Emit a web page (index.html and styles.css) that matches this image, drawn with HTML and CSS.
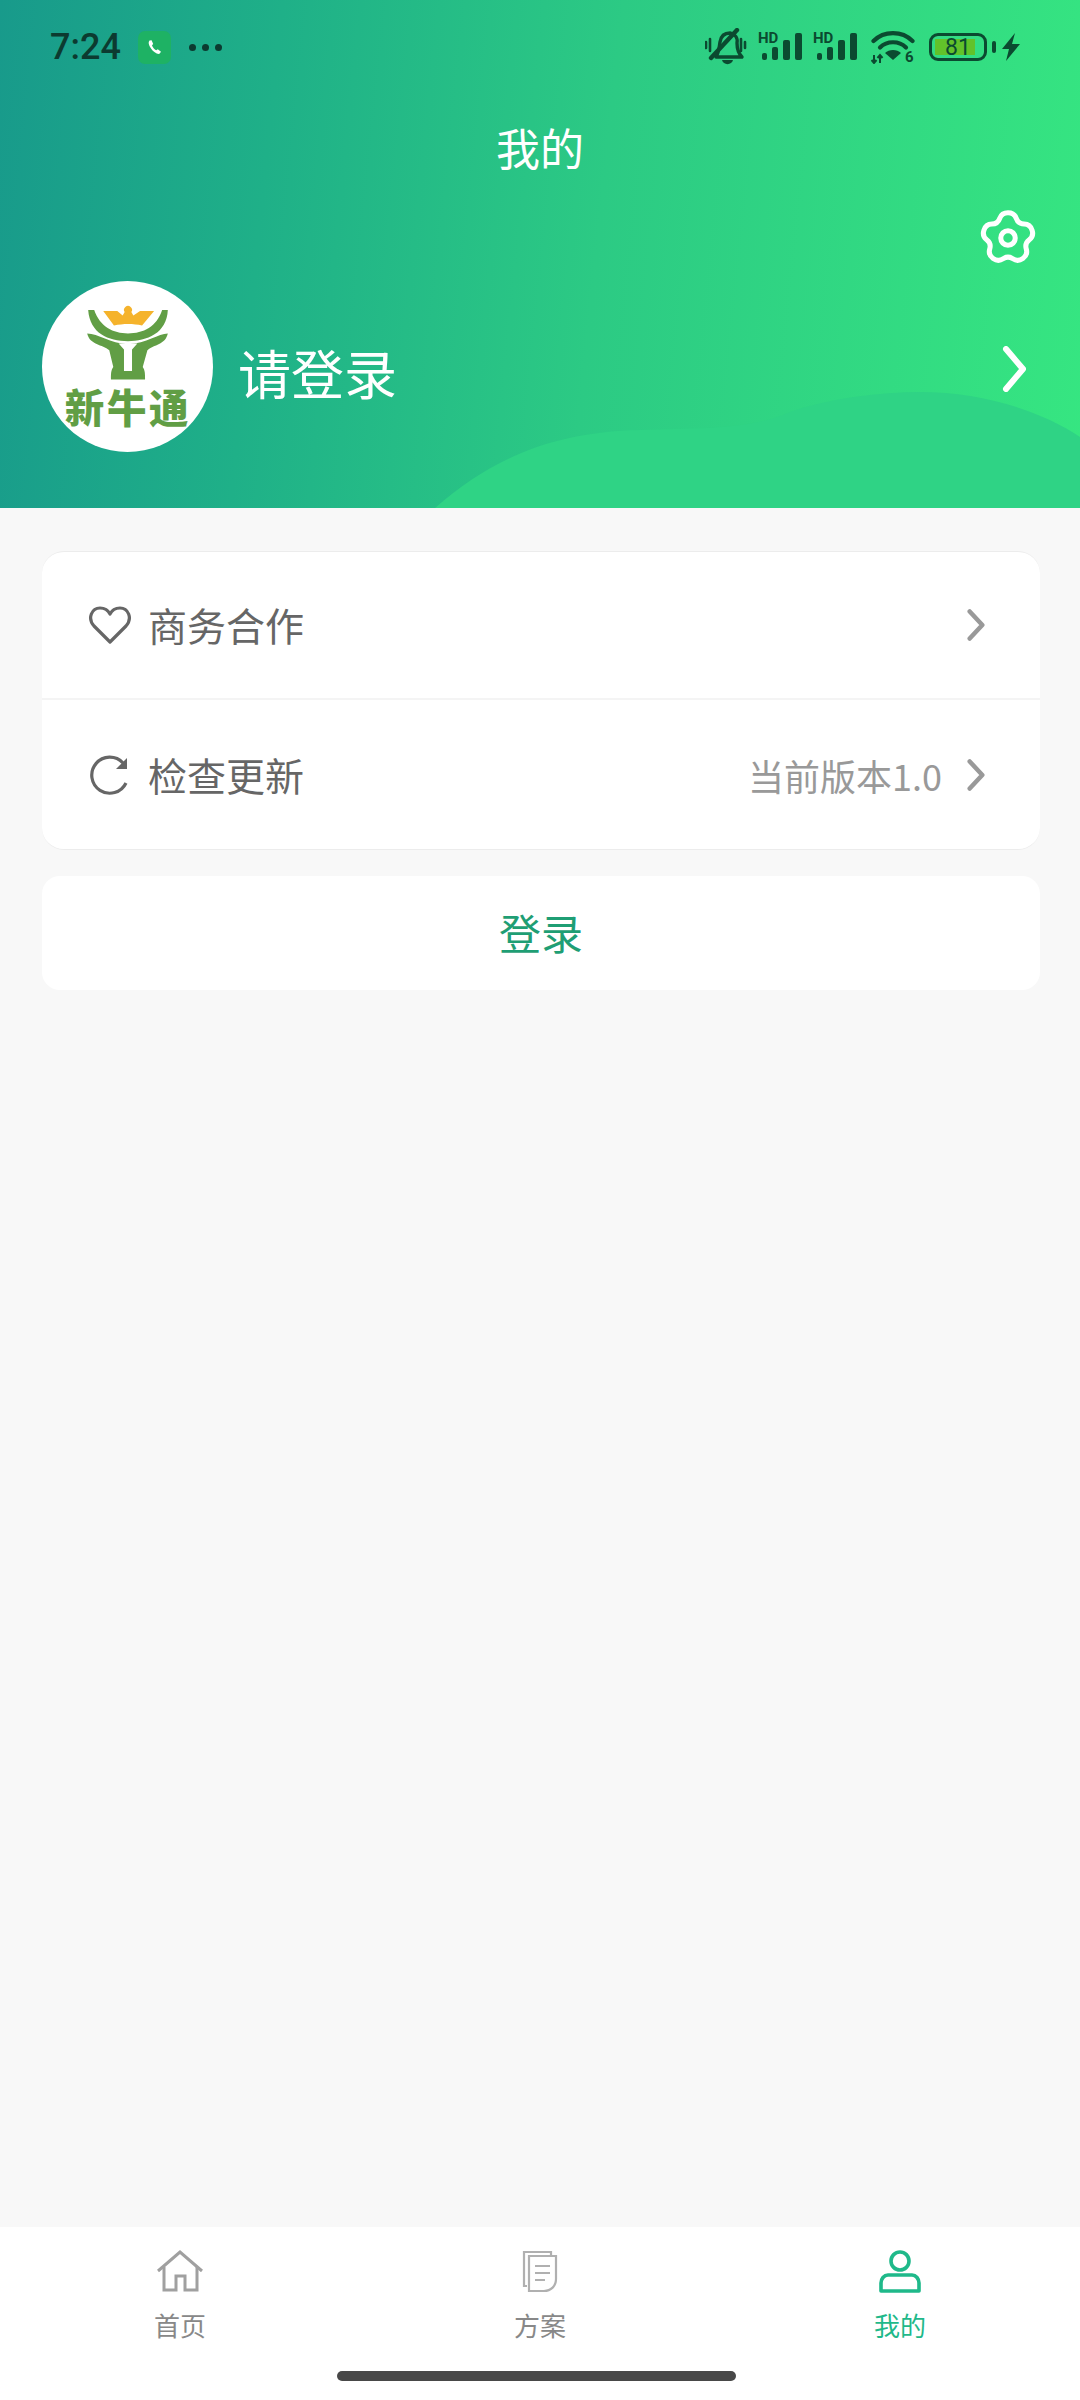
FILE: index.html
```html
<!DOCTYPE html>
<html lang="zh-CN">
<head>
<meta charset="utf-8">
<title>我的</title>
<link rel="stylesheet" href="styles.css">
</head>
<body>
<div class="app">
  <header class="hero">
    <svg class="hero-wave" viewBox="0 0 1080 130" aria-hidden="true">
      <path class="wave-a" d="M435 130 C490 82 550 54 640 52 C700 50 750 52 790 34 C830 20 880 14 920 14 C980 14 1040 32 1080 59 L1080 130 Z"/>
    </svg>
    <div class="statusbar">
      <div class="status-left">
        <span class="clock">7:24</span>
        <span class="call-badge">
          <svg viewBox="0 0 32 32" width="32" height="32"><path d="M11.5 9.5 C10 11 10.5 14 13 17.5 C15.5 21 19 23.5 21.5 22.8 L23 20.8 L19.8 18.3 L18.2 19.3 C16.5 18.5 14.5 16 14 14.2 L15.2 13 L13.6 9.2 Z" fill="#fff"/></svg>
        </span>
        <span class="dots"><i></i><i></i><i></i></span>
      </div>
      <div class="status-right">
        <svg class="ic-bell" viewBox="0 0 42 38" width="42" height="38"><g fill="none" stroke="#0b4a30" stroke-width="3.4" stroke-linecap="round" stroke-linejoin="round"><path d="M11 29 C14 24 14 20 15 14 C16 8 20 5 25 5 C30 6 33 10 32 15 C32 21 33 25 37 29 Z"/><path d="M6 30 L32 2" stroke-width="4.4"/><path d="M1 14 V20 M5 11 V23 M36 11 V23 M40 14 V20" stroke-width="2.6"/></g><path d="M17 32 H28 C27 37.5 18 37.5 17 32 Z" fill="#0b4a30"/></svg>
        <svg class="ic-signal" viewBox="0 0 46 34" width="46" height="34"><text x="0" y="13" class="hd">HD</text><g fill="#0b4a30"><rect x="4" y="23" width="5" height="7" rx="2"/><rect x="14" y="17" width="6" height="13" rx="2"/><rect x="25" y="10" width="7" height="20" rx="2"/><rect x="37" y="3" width="7" height="27" rx="2"/></g></svg>
        <svg class="ic-signal ic-signal-second" viewBox="0 0 46 34" width="46" height="34"><text x="0" y="13" class="hd">HD</text><g fill="#0b4a30"><rect x="4" y="23" width="5" height="7" rx="2"/><rect x="14" y="17" width="6" height="13" rx="2"/><rect x="25" y="10" width="7" height="20" rx="2"/><rect x="37" y="3" width="7" height="27" rx="2"/></g></svg>
        <svg class="ic-wifi" viewBox="0 0 44 34" width="44" height="34"><g fill="none" stroke="#0b4a30" stroke-width="4.2" stroke-linecap="round"><path d="M2.5 11 C13 0.5 31 0.5 41.5 11"/><path d="M9 17.5 C16 10.5 28 10.5 35 17.5"/></g><path d="M14 23 C18 19 26 19 30 23 L22 30 Z" fill="#0b4a30"/><text x="34" y="32" class="wifi6">6</text><path d="M3 25 V33 M0.5 30 L3 33 L5.5 30 M9 33 V25 M6.5 28 L9 25 L11.5 28" fill="none" stroke="#0b4a30" stroke-width="2"/></svg>
        <span class="battery"><span class="battery-level"></span><span class="battery-num">81</span></span>
        <span class="battery-nub"></span>
        <svg class="ic-bolt" viewBox="0 0 18 28" width="18" height="28"><path d="M13 0 L0 16 H7 L4 28 L18 11 H10 Z" fill="#0b4a30"/></svg>
      </div>
    </div>
    <h1 class="page-title">我的</h1>
    <div class="settings-row">
      <svg class="ic-gear" viewBox="0 0 60 60" width="58" height="58" fill="none" stroke="#fff" stroke-width="5.2" stroke-linejoin="round"><path d="M21.45 9.62 Q23.47 3.8 30 3.8 Q36.53 3.8 38.56 9.62 Q40.58 15.44 46.74 15.57 Q52.9 15.69 54.92 21.91 Q56.94 28.12 52.03 31.84 Q47.12 35.56 48.9 41.46 Q50.68 47.36 45.4 51.2 Q40.11 55.03 35.06 51.52 Q30 48 24.95 51.52 Q19.89 55.03 14.6 51.2 Q9.32 47.36 11.1 41.46 Q12.88 35.56 7.97 31.84 Q3.06 28.12 5.08 21.91 Q7.1 15.69 13.26 15.57 Q19.42 15.44 21.45 9.62 Z"/><circle cx="30" cy="30" r="7.5"/></svg>
    </div>
    <div class="profile">
      <div class="avatar">
        <svg viewBox="37 33 511 511" width="171" height="171">
          <path d="M175 120 L193 120 C210 170 250 190 294 190 C340 190 380 170 396 120 L413 120 C410 190 350 213 294 213 C235 213 180 190 175 120 Z" fill="#619e45"/>
          <path d="M220 123 L262 123 L278 136 L284 126 A12 12 0 1 1 304 126 L310 136 L330 123 L372 123 L336 166 C310 160 280 160 252 166 Z" fill="#f5b32c"/>
          <path d="M172 190 C205 190 240 220 294 222 C350 220 385 190 413 190 C405 225 372 222 352 240 L338 290 C345 300 345 310 345 327 L243 327 C243 310 243 300 250 290 L238 240 C218 222 180 225 172 190 Z" fill="#619e45"/>
          <path d="M266 220 L322 220 L306 238 L306 302 L282 302 L282 238 Z" fill="#fff"/>
          <text x="294" y="457" class="logo-text" text-anchor="middle">新牛通</text>
        </svg>
      </div>
      <span class="login-hint">请登录</span>
      <svg class="ic-chevron-white" viewBox="0 0 24 46" width="24" height="46" fill="none" stroke="#fff" stroke-width="6" stroke-linecap="round" stroke-linejoin="round"><path d="M4 3 L21 23 L4 43"/></svg>
    </div>
  </header>

  <main class="content">
    <section class="card">
      <div class="row row-first">
        <svg class="row-icon" viewBox="0 0 44 40" width="44" height="40" fill="none" stroke="#666" stroke-width="3.2" stroke-linejoin="round"><path d="M22 37 L6 21 C-1 13 4 3 12 3 C16 3 20 5 22 9 C24 5 28 3 32 3 C40 3 45 13 38 21 Z"/></svg>
        <span class="row-label">商务合作</span>
        <svg class="row-chevron" viewBox="0 0 20 36" width="18" height="34" fill="none" stroke="#999" stroke-width="5" stroke-linecap="round" stroke-linejoin="round"><path d="M3 3 L17 18 L3 33"/></svg>
      </div>
      <div class="row row-last">
        <svg class="row-icon" viewBox="-1 0 44 40" width="44" height="40" fill="none" stroke="#666" stroke-width="3.2"><path d="M37 28 A18 18 0 1 1 34 8"/><path d="M38 3 V14 H27 Z" fill="#666" stroke="none"/></svg>
        <span class="row-label">检查更新</span>
        <span class="row-value">当前版本1.0</span>
        <svg class="row-chevron" viewBox="0 0 20 36" width="18" height="34" fill="none" stroke="#999" stroke-width="5" stroke-linecap="round" stroke-linejoin="round"><path d="M3 3 L17 18 L3 33"/></svg>
      </div>
    </section>
    <button class="login-btn">登录</button>
  </main>

  <nav class="tabbar">
    <div class="tabs">
      <div class="tab">
        <svg viewBox="0 0 48 44" width="48" height="44" fill="none" stroke="#a0a0a0" stroke-width="3"><path d="M2 21 L24 2 L46 21"/><path d="M8 17 V40 H20 V26 H29 V40 H41 V17"/></svg>
        <span>首页</span>
      </div>
      <div class="tab">
        <svg viewBox="0 0 44 44" width="44" height="44" fill="none" stroke="#b0b0b0" stroke-width="2.2"><path d="M9 36 H6 V2 H33 V6"/><path d="M11 6 H38 V29 C38 36 33 41 26 41 H11 Z" /><path d="M17 16 H32 M17 23 H32 M17 30 H27"/></svg>
        <span>方案</span>
      </div>
      <div class="tab tab-active">
        <svg viewBox="0 0 44 44" width="44" height="44" fill="none" stroke="#1fb98a" stroke-width="3.6"><circle cx="22" cy="11" r="9"/><path d="M10 25 H34 C38 25 41 29 41 33 V41 H3 V33 C3 29 6 25 10 25 Z" stroke-linejoin="round"/></svg>
        <span>我的</span>
      </div>
    </div>
    <div class="home-indicator"></div>
  </nav>
</div>
</body>
</html>
```

FILE: styles.css
```css
* { box-sizing: border-box; }
html, body { margin: 0; padding: 0; }
body {
  width: 1080px;
  height: 2400px;
  overflow: hidden;
  background: #f8f8f8;
  font-family: "Noto Sans CJK SC", "Noto Sans", sans-serif;
}
.app { display: flex; flex-direction: column; height: 2400px; }

/* Header */
.hero {
  position: relative;
  height: 508px;
  flex: none;
  display: flex;
  flex-direction: column;
  background: linear-gradient(96deg, #189a8b 0%, #1fb088 25%, #2cca84 55%, #36e681 100%);
  overflow: hidden;
}
.hero-wave { position: absolute; left: 0; bottom: 0; width: 1080px; height: 130px; }
.wave-a { fill: #2fd385; }
.statusbar {
  position: relative;
  display: flex;
  justify-content: space-between;
  align-items: center;
  height: 50px;
  margin-top: 22px;
  padding: 0 60px 0 50px;
}
.status-left, .status-right { display: flex; align-items: center; }
.clock {
  font-family: Roboto, sans-serif;
  font-size: 36px;
  font-weight: 500;
  color: #0c3a30;
  width: 88px;
}
.call-badge {
  width: 33px; height: 33px;
  border-radius: 7px;
  background: #1eb264;
  display: flex;
}
.dots { display: flex; gap: 6px; margin-left: 18px; }
.dots i { width: 7px; height: 7px; border-radius: 50%; background: #0c3a30; }
.ic-signal { margin-left: 11px; }
.ic-signal-second { margin-left: 9px; }
.ic-wifi { margin-left: 12px; }
.hd { font: 700 15px Roboto, sans-serif; fill: #0b4a30; }
.wifi6 { font: 700 15px Roboto, sans-serif; fill: #0b4a30; }
.battery {
  position: relative;
  width: 58px; height: 28px;
  margin-left: 14px;
  border: 3px solid #0b4a30;
  border-radius: 9px;
  display: flex;
  align-items: center;
  justify-content: center;
}
.battery-level { position: absolute; left: 3px; top: 3px; bottom: 3px; width: 40px; background: #62c22a; }
.battery-num {
  position: relative;
  font: 400 23px Roboto, sans-serif;
  color: #0b4a30;
}
.battery-nub { width: 4px; height: 12px; border-radius: 2px; background: #0b4a30; margin-left: 5px; }
.ic-bolt { margin-left: 6px; }

.page-title {
  position: relative;
  margin: 48px 0 0;
  text-align: center;
  font-size: 44px;
  line-height: 54px;
  font-weight: 400;
  color: #fff;
}
.settings-row {
  position: relative;
  display: flex;
  justify-content: flex-end;
  padding-right: 43px;
  margin-top: 35px;
  height: 58px;
}
.profile {
  position: relative;
  display: flex;
  align-items: center;
  padding: 0 54px 0 42px;
  margin-top: 14px;
}
.avatar {
  width: 171px; height: 171px;
  border-radius: 50%;
  background: #fff;
  flex: none;
  display: flex;
  align-items: center;
  justify-content: center;
}
.logo-text { font-size: 118px; font-weight: 900; fill: #619e45; letter-spacing: 8px; }
.login-hint {
  font-size: 53px;
  font-weight: 400;
  line-height: 60px;
  color: #fff;
  margin-left: 25px;
  margin-top: 10px;
  flex: 1;
}
.ic-chevron-white { margin-top: 5px; }

/* Content */
.content {
  flex: 1;
  padding: 43px 40px 0 42px;
  display: flex;
  flex-direction: column;
}
.card {
  background: #fff;
  border-radius: 22px;
  border-top: 1px solid #ececec;
  border-bottom: 1px solid #ececec;
  height: 299px;
  display: flex;
  flex-direction: column;
}
.row {
  flex: 1;
  display: flex;
  align-items: center;
  padding: 0 55px 0 46px;
  border-bottom: 2px solid #f4f4f4;
}
.row-first { flex: 0 0 148px; }
.row-last { border-bottom: none; }
.row-icon { flex: none; }
.row-label { font-size: 39px; line-height: 48px; color: #666; margin-left: 16px; flex: 1; margin-top: -2px; }
.row-value { font-size: 36px; line-height: 48px; color: #999; margin-right: 25px; }
.row-chevron { flex: none; }
.login-btn {
  margin-top: 26px;
  height: 114px;
  border: none;
  border-radius: 18px;
  background: #fff;
  color: #1f9e74;
  font-family: inherit;
  font-size: 42px;
  padding-bottom: 4px;
}

/* Tab bar */
.tabbar {
  flex: none;
  height: 173px;
  background: #fff;
  display: flex;
  flex-direction: column;
  align-items: center;
}
.tabs { display: flex; width: 100%; justify-content: space-around; padding-top: 23px; height: 144px; }
.tab { display: flex; flex-direction: column; align-items: center; width: 360px; gap: 14px; font-size: 26px; line-height: 34px; color: #888; }
.tab-active { color: #1fb98a; }
.home-indicator { width: 399px; height: 10px; border-radius: 5px; background: #484848; margin-left: -7px; }
```
